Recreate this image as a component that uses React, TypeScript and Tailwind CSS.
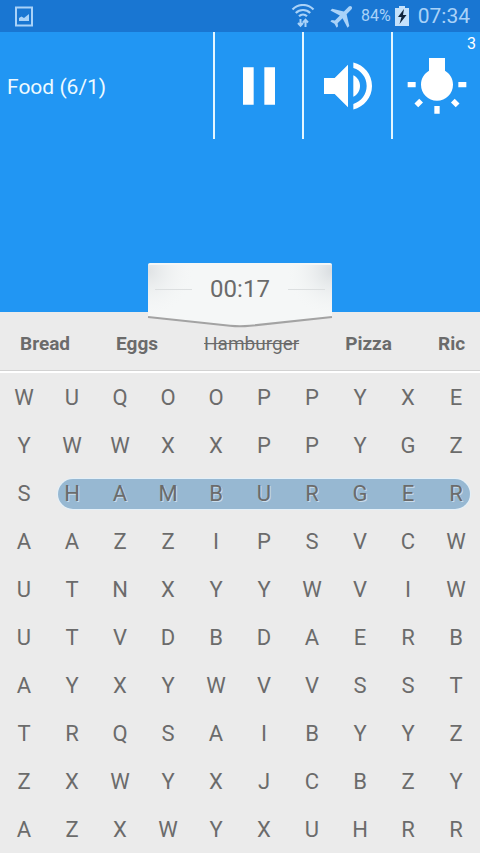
import clsx from "clsx";
import { type FC, type ReactElement, type ReactNode } from "react";

interface Word {
  label: string;
  found?: boolean;
}

const WORDS: Word[] = [
  { label: "Bread" },
  { label: "Eggs" },
  { label: "Hamburger", found: true },
  { label: "Pizza" },
  { label: "Ric" },
];

const ROWS = [
  "WUQOOPPYXE",
  "YWWXXPPYGZ",
  "SHAMBURGER",
  "AAZZIPSVCW",
  "UTNXYYWVIW",
  "UTVDBDAERB",
  "AYXYWVVSST",
  "TRQSAIBYYZ",
  "ZXWYXJCBZY",
  "AZXWYXUHRR",
];

const FOUND_ROW = 2;

const StatusBar: FC = (): ReactElement => (
  <div className="flex h-8 shrink-0 items-center bg-[#1976d2] pr-2.5 pl-[15px] text-[#a9d2f8]">
    <svg className="h-[21px] w-[18px]" viewBox="0 0 18 21" fill="none">
      <rect x="1" y="1.5" width="16" height="18" stroke="currentColor" strokeWidth="2" />
      <path d="M4 15V12l2.5-1.5L9 12l5-4v7z" fill="currentColor" />
    </svg>
    <div className="ml-auto flex items-center">
      {/* wifi with the traffic arrows */}
      <svg className="mr-3.5 h-6 w-6" viewBox="0 0 24 24" fill="none" stroke="currentColor">
        <path d="M1.5 5.5C7.5 -.5 16.5 -.5 22.5 5.5" strokeWidth="2.2" />
        <path d="M4.8 9c4-4 10.400-4 14.400 0" strokeWidth="2.2" />
        <path d="M8 12.300c2.300-2.200 5.700-2.200 8 0" strokeWidth="2.2" />
        <path d="M9.500 15v7M7 19l2.500 2.700 2.500-2.700M14.500 23v-7M12 18.500l2.500-2.700 2.500 2.700" strokeWidth="2" />
      </svg>
      <svg className="mr-1 h-7 w-7" viewBox="1 1 22 22" fill="currentColor">
        <path
          transform="rotate(45 12 12)"
          d="M21 16v-2l-8-5V3.5c0-.83-.67-1.5-1.5-1.5S10 2.67 10 3.5V9l-8 5v2l8-2.500V19l-2 1.500V22l3.500-1 3.500 1v-1.500L13 19v-5.500l8 2.500z"
        />
      </svg>
      <span className="mr-1 text-base">84%</span>
      <svg className="mr-[9px] h-5 w-3.5" viewBox="0 0 14 20">
        <path d="M0 2h4V0h6v2h4v18H0z" fill="#c5e1fb" />
        <path d="M9 3 3 11h3.500L4.500 18 11.500 9H8z" fill="#10243c" />
      </svg>
      <span className="text-[21px] leading-8">07:34</span>
    </div>
  </div>
);

interface ToolButtonProps {
  label: string;
  badge?: number;
  children: ReactNode;
}

const ToolButton: FC<ToolButtonProps> = ({ label, badge, children }): ReactElement => (
  <button
    type="button"
    aria-label={label}
    className="relative flex h-[107px] w-[89px] items-center justify-center border-l-2 border-[#e3f6ff]"
  >
    {children}
    {badge != null && (
      <span className="absolute top-1 right-1 text-base leading-4">{badge}</span>
    )}
  </button>
);

const PauseIcon: FC = (): ReactElement => (
  <svg className="h-16 w-16" viewBox="0 0 24 24" fill="currentColor">
    <path d="M6 19h4V5H6v14zm8-14v14h4V5h-4z" />
  </svg>
);

const VolumeIcon: FC = (): ReactElement => (
  <svg className="h-16 w-16" viewBox="0 0 24 24" fill="currentColor">
    <path d="M3 9v6h4l5 5V4L7 9H3z" />
    <path d="M16.5 12c0-1.77-1.02-3.29-2.5-4.03v8.05c1.48-.73 2.5-2.25 2.5-4.02z" />
    <path d="M14 3.23v2.06c2.89.86 5 3.54 5 6.71s-2.11 5.85-5 6.71v2.06c4.01-.91 7-4.49 7-8.77s-2.99-7.86-7-8.77z" />
  </svg>
);

const HintIcon: FC = (): ReactElement => (
  <svg className="h-16 w-16" viewBox="0 0 24 24" fill="currentColor">
    <path d="M3.55 18.54l1.41 1.41 1.79-1.8-1.41-1.41-1.79 1.8zM11 22.45h2V19.5h-2v2.95zM4 10.5H1v2h3v-2zm11-4.19V1.5H9v4.81C7.21 7.35 6 9.28 6 11.5c0 3.31 2.69 6 6 6s6-2.69 6-6c0-2.22-1.21-4.15-3-5.19zm5 4.19v2h3v-2h-3zm-2.76 7.66l1.79 1.8 1.41-1.41-1.8-1.79-1.4 1.4z" />
  </svg>
);

const TimerTag: FC<{ time: string }> = ({ time }): ReactElement => (
  <div className="absolute bottom-0 left-1/2 h-[49px] w-[185px] -translate-x-1/2">
    <svg className="absolute top-0 left-0 h-[66px] w-full" viewBox="0 0 184 66" fill="none">
      <defs>
        <radialGradient id="cornerLeft" gradientUnits="userSpaceOnUse" cx="0" cy="8" r="46">
          <stop offset="0" stopColor="#dfe2e4" />
          <stop offset="1" stopColor="#f5f7f7" stopOpacity="0" />
        </radialGradient>
        <radialGradient id="cornerRight" gradientUnits="userSpaceOnUse" cx="184" cy="8" r="46">
          <stop offset="0" stopColor="#d9dde0" />
          <stop offset="1" stopColor="#f5f7f7" stopOpacity="0" />
        </radialGradient>
      </defs>
      <path d="M2 0h180q2 0 2 2v52l-80 8.500q-12 1-24 0L0 54V2q0-2 2-2z" fill="#f5f7f7" />
      <path d="M0 2h184v52H0z" fill="url(#cornerLeft)" />
      <path d="M0 2h184v52H0z" fill="url(#cornerRight)" />
      <path d="M0 54 82 62.800q10 1 20 0L184 54" stroke="#a3a3a3" strokeWidth="2" />
      <path d="M7 26.500h37M140 26.500h37" stroke="#dcdfe0" />
    </svg>
    <p className="relative pt-2.5 text-center text-2xl leading-8 text-[#6b6b6b]">{time}</p>
  </div>
);

const WordList: FC = (): ReactElement => (
  <ul className="flex h-[59px] shrink-0 items-center gap-[46px] overflow-hidden border-b border-[#d2d2d2] pt-1.5 pl-5 text-[19px]">
    {WORDS.map(({ label, found }) => (
      <li key={label} className={clsx(found ? "line-through" : "font-bold")}>
        {label}
      </li>
    ))}
  </ul>
);

const LetterGrid: FC = (): ReactElement => (
  <div className="border-t-2 border-white pt-px text-[22px] leading-[48px]">
    {ROWS.map((row, y) => (
      <div key={row} className="relative grid grid-cols-10 text-center">
        {y === FOUND_ROW && (
          <div className="absolute inset-y-[9px] right-[2%] left-[12%] rounded-full bg-[#97b8d2] ring-1 ring-[#e4f0f8]" />
        )}
        {row.split("").map((letter, x) => (
          <span
            key={x}
            className={clsx(
              "relative",
              y === FOUND_ROW && x > 0 && "[text-shadow:1px_1px_0_#c9dceb]",
            )}
          >
            {letter}
          </span>
        ))}
      </div>
    ))}
  </div>
);

const App: FC = (): ReactElement => {
  return (
    <div className="flex h-screen flex-col overflow-hidden bg-[#ebebeb] font-[Roboto,sans-serif] text-[#6b6b6b]">
      <StatusBar />
      <header className="relative h-[280px] shrink-0 bg-[#2196f3] text-white">
        <div className="flex items-center">
          <h1 className="flex-1 pt-1 pl-[7px] text-[21px] text-[#eefaff]">Food (6/1)</h1>
          <ToolButton label="Pause">
            <PauseIcon />
          </ToolButton>
          <ToolButton label="Sound">
            <VolumeIcon />
          </ToolButton>
          <ToolButton label="Hint" badge={3}>
            <HintIcon />
          </ToolButton>
        </div>
        <TimerTag time="00:17" />
      </header>
      <WordList />
      <LetterGrid />
    </div>
  );
};

export default App;
